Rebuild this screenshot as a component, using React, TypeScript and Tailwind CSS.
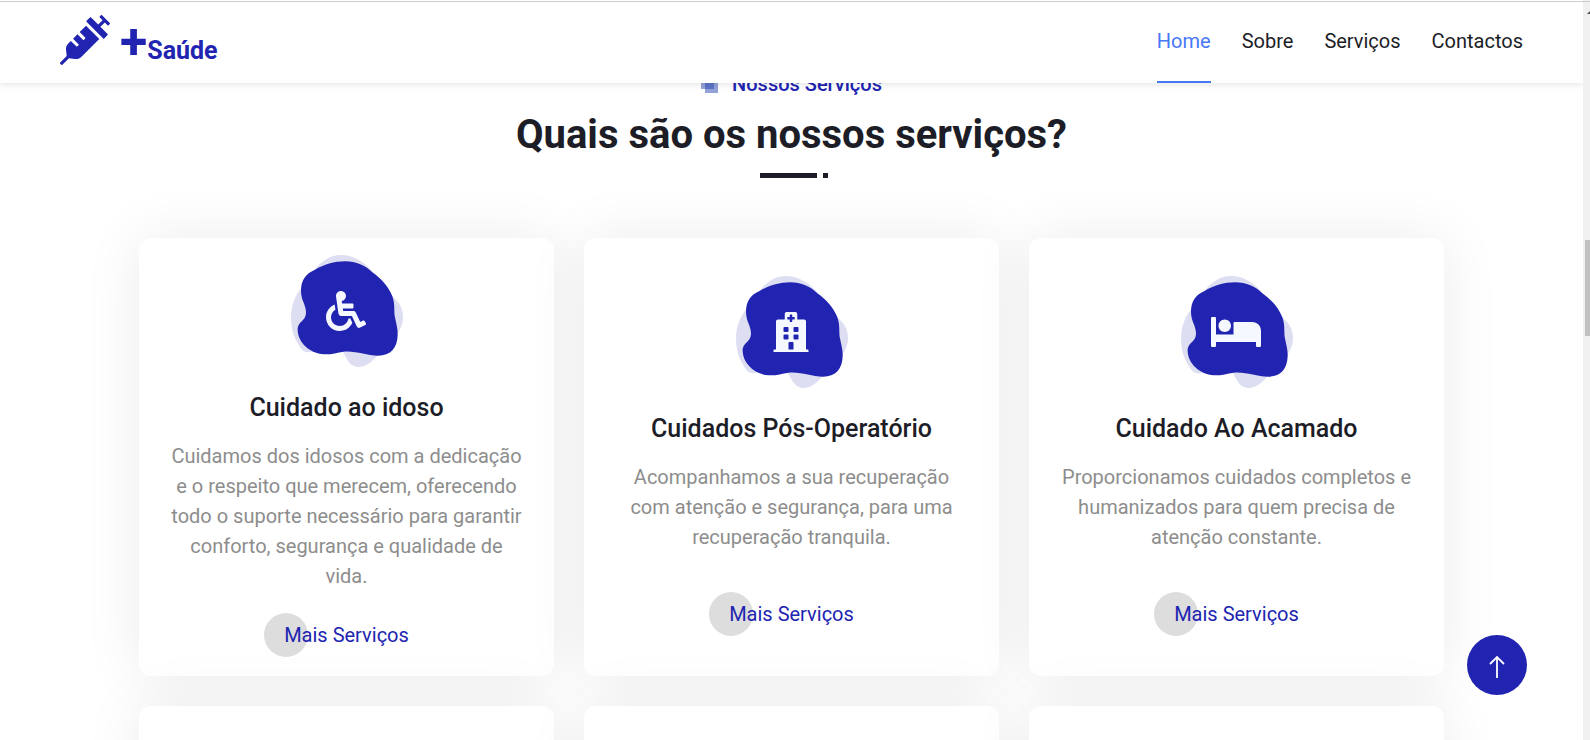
import type { ReactNode } from 'react';
import { FaBed, FaHospital, FaSyringe, FaWheelchair } from 'react-icons/fa';

type Service = {
  title: string;
  text: string;
  icon: ReactNode;
};

const services: Service[] = [
  {
    title: 'Cuidado ao idoso',
    text: 'Cuidamos dos idosos com a dedicação e o respeito que merecem, oferecendo todo o suporte necessário para garantir conforto, segurança e qualidade de vida.',
    icon: <FaWheelchair size={40} />,
  },
  {
    title: 'Cuidados Pós-Operatório',
    text: 'Acompanhamos a sua recuperação com atenção e segurança, para uma recuperação tranquila.',
    icon: <FaHospital size={40} />,
  },
  {
    title: 'Cuidado Ao Acamado',
    text: 'Proporcionamos cuidados completos e humanizados para quem precisa de atenção constante.',
    icon: <FaBed className="h-10 w-[50px]" />,
  },
];

const navItems = ['Home', 'Sobre', 'Serviços', 'Contactos'];

function Blob() {
  return (
    <svg viewBox="0 0 336 336" className="col-start-1 row-start-1 size-28" aria-hidden="true">
      <path
        fill="#dedef3"
        d="M70 45C92 18 118 0 150 0C184 0 216 18 240 45L312 132C328 146 336 164 336 187C336 207 328 224 316 240L258 304C238 326 222 336 202 336C180 336 168 316 156 291L60 290C40 296 31 284 20 264C6 242 0 216 0 186C0 154 12 120 32 98Z"
      />
      <path
        fill="#2124b1"
        d="M72 44C98 29 130 19 162 19C197 19 222 31 244 52C272 72 293 96 304 124C312 146 309 162 311 182C314 200 321 220 320 240C319 281 297 302 262 302C225 302 197 287 158 290C137 293 121 299 98 298C57 296 21 263 20 226C20 196 45 201 45 171C44 147 30 136 30 107C30 77 43 56 72 44Z"
      />
    </svg>
  );
}

function ServiceCard({ service }: { service: Service }) {
  return (
    <article className="flex min-h-[438px] flex-col items-center justify-center rounded-xl bg-white px-[30px] pt-4 pb-[18px] text-center shadow-[0_0_60px_rgba(0,0,0,0.08)]">
      <div className="grid place-items-center text-[#f5f8ff]">
        <Blob />
        <span className="col-start-1 row-start-1 mr-px">{service.icon}</span>
      </div>
      <h3 className="mt-[26px] text-[25px] leading-[30px] font-medium text-[#1d1d27]">{service.title}</h3>
      <p className="mt-[18px] min-h-[108px] text-[20px] leading-[30px] text-[#8d8d8d]">{service.text}</p>
      <a href="#servicos" className="mt-[22px] flex h-11 items-center text-[20px] text-[#2124b1]">
        <span className="-mr-6 -ml-5 h-11 w-11 rounded-full bg-[#dddddd]" aria-hidden="true" />
        <span className="relative">Mais Serviços</span>
      </a>
    </article>
  );
}

export default function App() {
  return (
    <div className="flex h-screen overflow-hidden bg-white font-['Roboto',sans-serif]">
      <div className="relative min-w-0 flex-1">
        <header className="absolute inset-x-0 top-0 z-10 flex h-[83px] items-stretch justify-between bg-white px-[60px] shadow-[0_2px_6px_rgba(0,0,0,0.1)]">
          <a href="#home" className="flex items-center text-[#2124b1]" aria-label="+Saúde">
            <FaSyringe size={50} className="mb-1" />
            <span className="ml-2.5 flex items-baseline font-bold">
              <span className="text-[50px] leading-[60px]">+</span>
              <span className="text-[25px]">Saúde</span>
            </span>
          </a>
          <nav className="flex gap-[31px] text-[20px] text-[#1d1d27]">
            {navItems.map((item) => (
              <a
                key={item}
                href={`#${item.toLowerCase()}`}
                className={
                  item === 'Home'
                    ? 'flex items-center border-b-2 border-[#4777f5] text-[#4777f5]'
                    : 'flex items-center border-b-2 border-transparent'
                }
              >
                {item}
              </a>
            ))}
          </nav>
        </header>

        <main id="servicos" className="px-[139px] pt-[69px]">
          <div className="flex flex-col items-center">
            <div className="flex items-center gap-3.5 text-[20px] leading-[30px] font-medium text-[#2124b1]">
              <svg viewBox="0 0 17 17" className="size-[17px]" aria-hidden="true">
                <path d="M0 0h13v13H0z" fill="#2846b4" fillOpacity="0.5" />
                <path d="M4 4h13v13H4z" fill="#2846b4" fillOpacity="0.5" />
              </svg>
              Nossos Serviços
            </div>
            <h2 className="mt-3 text-[40px] leading-12 font-bold text-[#1d1d27]">Quais são os nossos serviços?</h2>
            <div className="mt-3.5 flex gap-1.5 pl-1" aria-hidden="true">
              <span className="h-[5px] w-[57px] bg-[#1d1d27]" />
              <span className="h-[5px] w-[5px] bg-[#1d1d27]" />
            </div>
          </div>

          <div className="mt-[60px] grid grid-cols-3 gap-[30px]">
            {services.map((service) => (
              <ServiceCard key={service.title} service={service} />
            ))}
            {services.map((service) => (
              <article
                key={`${service.title}-next`}
                className="min-h-[438px] rounded-xl bg-white shadow-[0_0_60px_rgba(0,0,0,0.08)]"
              />
            ))}
          </div>
        </main>

        <button
          type="button"
          aria-label="Voltar ao topo"
          className="absolute right-14 bottom-[45px] z-10 grid size-[60px] place-items-center rounded-full bg-[#2124b1] pt-1 text-white"
        >
          <svg viewBox="0 0 16 24" className="h-6 w-4" fill="none" stroke="currentColor" strokeWidth="1.8" aria-hidden="true">
            <path d="M8 23V2M1 9l7-7 7 7" />
          </svg>
        </button>
      </div>

      <div className="relative z-20 w-[7px] bg-[#f0f0f0] pt-[240px] pl-0.5" aria-hidden="true">
        <div className="h-24 bg-[#c1c1c1]" />
        <svg viewBox="0 0 3 3" className="absolute top-[11px] right-0 size-[3px]">
          <path d="M0 3L3 0V3Z" fill="#505050" />
        </svg>
      </div>
      <div className="absolute inset-x-0 top-px z-30 h-px bg-[#cccccc]" aria-hidden="true" />
    </div>
  );
}
